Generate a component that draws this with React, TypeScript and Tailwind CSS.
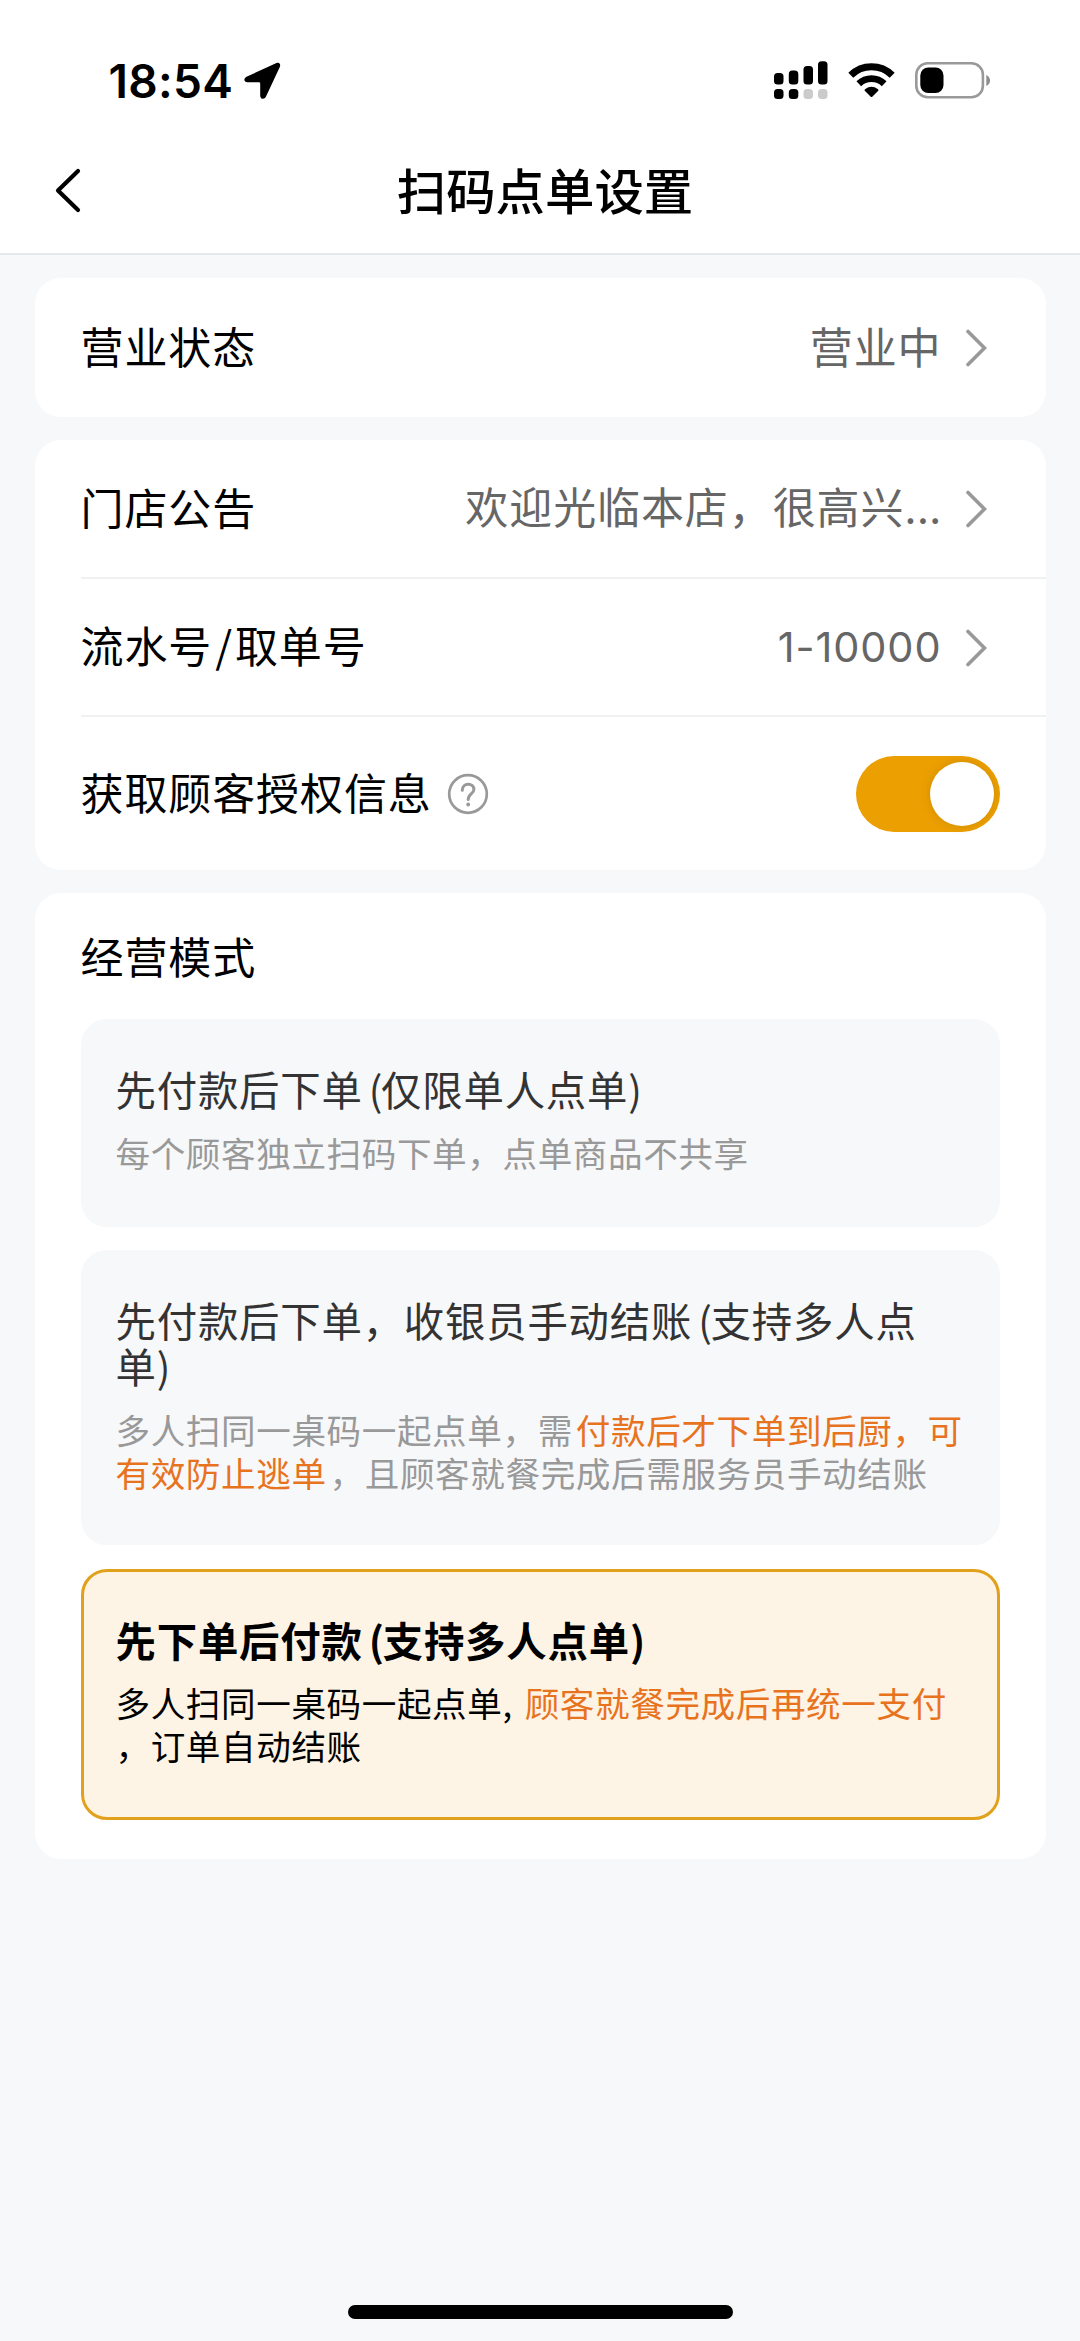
import type { ReactNode } from "react";

function StatusBar() {
  return (
    <div className="flex h-[136px] items-start justify-between pl-[108.500px] pr-[89px] pt-[62px]">
      <div className="flex items-start">
        <span className="w-[135.500px] whitespace-nowrap pt-px font-['Inter'] text-[46px] font-semibold leading-[37px] tracking-[0.300px]">
          18:54
        </span>
        <svg width="37" height="38" viewBox="0 0 37 38">
          <path
            d="M32.500 1 3 14.500C-.9 16.300-.2 20.300 3.500 20.300H14.800C15.900 20.300 16.200 20.800 16.200 21.800V33.500C16.200 37.500 20.400 38 22 34.600L35.800 5C37 2 35.200-.2 32.500 1Z"
            fill="#000"
          />
        </svg>
      </div>
      <div className="flex items-start">
        <svg className="overflow-visible" width="54" height="40" viewBox="0 0 54 40">
          <rect x="0" y="11" width="9.500" height="11.500" rx="3.500" />
          <rect x="14.800" y="8.500" width="9.500" height="14" rx="3.500" />
          <rect x="29.500" y="4" width="9.500" height="18.500" rx="3.500" />
          <rect x="44" y="-.7" width="9.500" height="23.200" rx="3.500" />
          <rect x="0" y="27" width="9.500" height="10" rx="3.500" />
          <rect x="14.800" y="27" width="9.500" height="10" rx="3.500" />
          <rect x="29.500" y="27" width="9.500" height="10" rx="3.500" fill="#cbcbcb" />
          <rect x="44" y="27" width="9.500" height="10" rx="3.500" fill="#cbcbcb" />
        </svg>
        <svg className="ml-5" width="47" height="37" viewBox="0 0 47 37">
          <path d="M2.800 13.200A29.500 29.500 0 0 1 44.200 13.200" fill="none" stroke="#000" strokeWidth="7" />
          <path d="M10.800 21.700A18.200 18.200 0 0 1 36.200 21.700" fill="none" stroke="#000" strokeWidth="6.800" />
          <path d="M16.500 28.400Q16.500 27.700 17.300 27.100Q23.500 22.600 29.700 27.100Q30.500 27.700 30.500 28.400L24.500 34.500Q23.500 35.500 22.500 34.500Z" />
        </svg>
        <svg className="ml-5" width="76" height="38" viewBox="0 0 76 38">
          <rect x="1.300" y="1.300" width="66.600" height="34" rx="11.500" fill="none" stroke="#999" strokeWidth="2.600" />
          <rect x="5.300" y="5.500" width="23.200" height="25.500" rx="8" />
          <path d="M71.300 13V24Q75 22 75 18.500Q75 15 71.300 13Z" fill="#8d8d8d" />
        </svg>
      </div>
    </div>
  );
}

function NavBar() {
  return (
    <div className="flex h-[119px] items-center justify-between border-b-2 border-[#e7e8ea] px-[54px] pb-[9px]">
      <svg width="30" height="46" viewBox="0 0 30 46">
        <path d="M24 4 4 23.500 24 43" fill="none" stroke="#000" strokeWidth="4.200" strokeLinecap="round" strokeLinejoin="round" />
      </svg>
      <h1 className="pb-0.5 pl-2.5 text-[49.400px] font-medium leading-[60px]">扫码点单设置</h1>
      <span className="w-[30px]" />
    </div>
  );
}

function Chevron() {
  return (
    <svg className="ml-[23px] mr-[59px] mt-0.5 shrink-0" width="22" height="38" viewBox="0 0 22 38">
      <path d="M3 2.500 19.500 19 3 35.500" fill="none" stroke="#999" strokeWidth="3.600" strokeLinecap="round" />
    </svg>
  );
}

function Row({ label, divider, tall, children }: { label: ReactNode; divider?: boolean; tall?: boolean; children: ReactNode }) {
  return (
    <div
      className={`ml-[46px] flex items-center justify-between ${tall ? "h-[153px]" : "h-[138.500px]"} ${
        divider ? "border-b-2 border-[#f0f1f1]" : ""
      }`}
    >
      <div className="flex items-center pb-[5px] text-[43px] leading-[56px] tracking-[0.900px]">{label}</div>
      <div className="flex items-center text-[#666]">{children}</div>
    </div>
  );
}

function Card({ className, children }: { className: string; children: ReactNode }) {
  return <section className={`mx-[34.500px] rounded-[26px] bg-white ${className}`}>{children}</section>;
}

function HelpIcon() {
  return (
    <svg className="ml-[15px] mt-1.5" width="42" height="42" viewBox="0 0 42 42" fill="none" stroke="#999">
      <circle cx="21" cy="21" r="18.800" strokeWidth="2.700" />
      <path
        d="M15.300 17.200C15.300 9.300 26.900 9.300 26.900 16.500C26.900 20.700 21.200 20.800 21.200 26.500"
        strokeWidth="3"
        strokeLinecap="round"
      />
      <circle cx="21.200" cy="31.500" r="1.900" fill="#999" stroke="none" />
    </svg>
  );
}

function Toggle() {
  return (
    <div className="mr-[46px] flex h-[76px] w-[144px] items-center justify-end rounded-full bg-[#ec9f00] pr-1.5">
      <span className="size-[64px] rounded-full bg-white shadow-[0_0_10px_rgba(120,90,0,0.25)]" />
    </div>
  );
}

function Hot({ children }: { children: ReactNode }) {
  return <span className="text-[#e8731e]">{children}</span>;
}

function Paren() {
  return <span className="-mr-0.5 ml-1.5">(</span>;
}

function Option({ title, active, className, children }: { title: ReactNode; active?: boolean; className: string; children: ReactNode }) {
  return (
    <div
      className={`whitespace-nowrap rounded-[26px] border-[3px] px-8 ${
        active ? "border-[#e2a11c] bg-[#fef4e5]" : "border-[#f7f8fa] bg-[#f7f8fa]"
      } ${className}`}
    >
      <h3 className={`text-[40.400px] leading-[46.500px] tracking-[0.800px] ${active ? "font-bold text-black" : "text-[#333]"}`}>
        {title}
      </h3>
      <p className={`mt-[18px] text-[34.600px] leading-[43.300px] tracking-[0.600px] ${active ? "text-black" : "text-[#999]"}`}>
        {children}
      </p>
    </div>
  );
}

export default function App() {
  return (
    <div
      lang="zh-CN"
      className="flex h-[2341px] w-[1080px] flex-col overflow-hidden bg-[#f7f8fa] font-['Noto_Sans_CJK_SC',sans-serif] text-black"
    >
      <header className="bg-white">
        <StatusBar />
        <NavBar />
      </header>

      <main className="flex flex-1 flex-col">
        <Card className="mt-[23px]">
          <Row label="营业状态">
            <span className="pb-[5px] text-[43px] leading-[56px] tracking-[0.900px]">营业中</span>
            <Chevron />
          </Row>
        </Card>

        <Card className="mt-[23.500px]">
          <Row label="门店公告" divider>
            <span className="pb-[3px] text-[43px] leading-[56px] tracking-[0.900px]">
              欢迎光临本店，很高兴<span className="font-['Inter'] tracking-[0px]">...</span>
            </span>
            <Chevron />
          </Row>
          <Row
            divider
            label={
              <>
                流水号<span className="pl-[3px] pr-0.5">/</span>取单号
              </>
            }
          >
            <span className="pt-px font-['Inter'] text-[41.500px] leading-[56px] tracking-[0.900px]">1-10000</span>
            <Chevron />
          </Row>
          <Row
            tall
            label={
              <>
                获取顾客授权信息
                <HelpIcon />
              </>
            }
          >
            <Toggle />
          </Row>
        </Card>

        <Card className="mt-[23px] h-[966px] px-[46px] pt-[34px]">
          <h2 className="text-[43px] leading-[56px] tracking-[0.900px]">经营模式</h2>
          <div className="mt-9 flex flex-col gap-[23.500px]">
            <Option
              className="h-[207.500px] pt-[44px]"
              title={
                <>
                  先付款后下单
                  <Paren />
                  仅限单人点单)
                </>
              }
            >
              每个顾客独立扫码下单，点单商品不共享
            </Option>
            <Option
              className="h-[295px] pt-[43.500px]"
              title={
                <>
                  先付款后下单，收银员手动结账
                  <Paren />
                  支持多人点
                  <br />
                  单)
                </>
              }
            >
              多人扫同一桌码一起点单，需
              <span className="ml-[3px]">
                <Hot>付款后才下单到后厨，可</Hot>
              </span>
              <br />
              <Hot>有效防止逃单</Hot>
              <span className="ml-[3px]">，且顾客就餐完成后需服务员手动结账</span>
            </Option>
            <Option
              active
              className="h-[251px] pt-[45px]"
              title={
                <>
                  先下单后付款
                  <Paren />
                  支持多人点单)
                </>
              }
            >
              多人扫同一桌码一起点单<span className="mr-3">,</span>
              <Hot>顾客就餐完成后再统一支付</Hot>
              <br />，订单自动结账
            </Option>
          </div>
        </Card>
      </main>

      <footer className="flex justify-center pb-[22px]">
        <div className="h-[14px] w-[385px] rounded-full bg-black" />
      </footer>
    </div>
  );
}
